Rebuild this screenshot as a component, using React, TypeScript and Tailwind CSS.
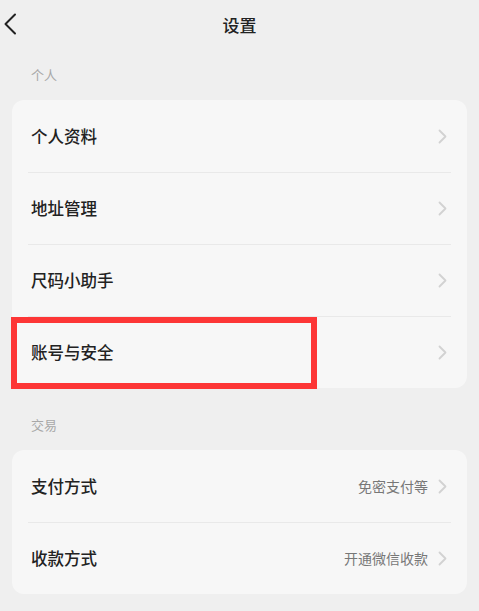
const font = { fontFamily: '"Noto Sans CJK SC", "Noto Sans", sans-serif' };

const Chevron = () => (
  <svg width="10" height="15" viewBox="0 0 10 15" fill="none" className="shrink-0">
    <path d="M1.5 1.5 L7.5 7.5 L1.5 13.5" stroke="#d2d2d2" strokeWidth="1.8" strokeLinecap="round" strokeLinejoin="round" />
  </svg>
);

type Row = { title: string; value?: string; highlight?: boolean };

const Section = ({ label, rows }: { label: string; rows: Row[] }) => (
  <div>
    <div className="pl-[31px] h-[50px] flex items-center text-[13px] text-[#a8a8a8]">{label}</div>
    <div className="mx-3 rounded-xl bg-[#f7f7f7]">
      {rows.map((row, i) => (
        <div key={row.title} className="relative">
          {i > 0 && <div className="mx-4 h-px bg-[#e9e9e9]" />}
          <div className={`${i > 0 ? 'h-[71px]' : 'h-[72px]'} flex items-center pl-[19px] pr-[19px]`}>
            <span className="flex-1 text-[16.5px] font-medium text-[#222]">{row.title}</span>
            {row.value && <span className="mr-[10px] text-[14px] text-[#777]">{row.value}</span>}
            <Chevron />
          </div>
          {row.highlight && (
            <div className="absolute left-[-1px] bottom-[-1px] w-[306px] h-[72px] border-[6px] border-[#fd3636]" />
          )}
        </div>
      ))}
    </div>
  </div>
);

export default function App() {
  return (
    <div className="w-[479px] h-[611px] bg-[#efefef] overflow-hidden" style={font}>
      <div className="relative h-[50px] flex items-center justify-center">
        <svg width="14" height="22" viewBox="0 0 14 22" fill="none" className="absolute left-[3px] top-[13px]">
          <path d="M12 1.5 L2.5 11 L12 20.5" stroke="#222" strokeWidth="2" strokeLinecap="round" strokeLinejoin="round" />
        </svg>
        <span className="text-[17px] font-medium text-[#222]">设置</span>
      </div>
      <Section
        label="个人"
        rows={[
          { title: '个人资料' },
          { title: '地址管理' },
          { title: '尺码小助手' },
          { title: '账号与安全', highlight: true },
        ]}
      />
      <div className="h-3" />
      <Section
        label="交易"
        rows={[
          { title: '支付方式', value: '免密支付等' },
          { title: '收款方式', value: '开通微信收款' },
        ]}
      />
    </div>
  );
}
